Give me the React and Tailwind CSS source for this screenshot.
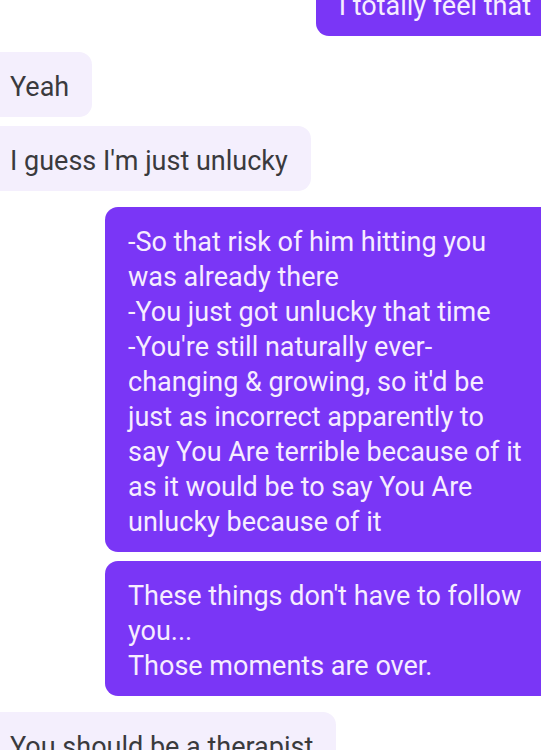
const messages = [
  { id: 1, mine: true, text: 'I totally feel that' },
  { id: 2, mine: false, text: 'Yeah' },
  { id: 3, mine: false, text: "I guess I'm just unlucky" },
  {
    id: 4,
    mine: true,
    text: "-So that risk of him hitting you was already there\n-You just got unlucky that time\n-You're still naturally ever-changing & growing, so it'd be just as incorrect apparently to say You Are terrible because of it as it would be to say You Are unlucky because of it",
  },
  { id: 5, mine: true, text: "These things don't have to follow you...\nThose moments are over." },
  { id: 6, mine: false, text: 'You should be a therapist' },
]

export default function App() {
  return (
    <div className="h-[750px] w-[541px] overflow-hidden bg-white font-['Roboto',sans-serif]">
      <div className="-ml-[13px] -mt-[29px] flex w-[567px] flex-col">
        {messages.map((msg, i) => {
          const prev = messages[i - 1]
          const spacing = !prev ? '' : prev.mine === msg.mine ? 'mt-[9px]' : 'mt-[16px]'
          return <Bubble key={msg.id} msg={msg} spacing={spacing} />
        })}
      </div>
    </div>
  )
}

function Bubble({ msg, spacing }) {
  return (
    <div
      className={`${spacing} max-w-[449px] whitespace-pre-line rounded-[13px] px-[23px] pt-[18px] pb-[12px] text-[27px] leading-[35px] ${
        msg.mine ? 'self-end bg-[#7a36f6] text-[#f6edff]' : 'self-start bg-[#f4effd] text-[#3a3a3d]'
      }`}
    >
      {msg.text}
    </div>
  )
}
